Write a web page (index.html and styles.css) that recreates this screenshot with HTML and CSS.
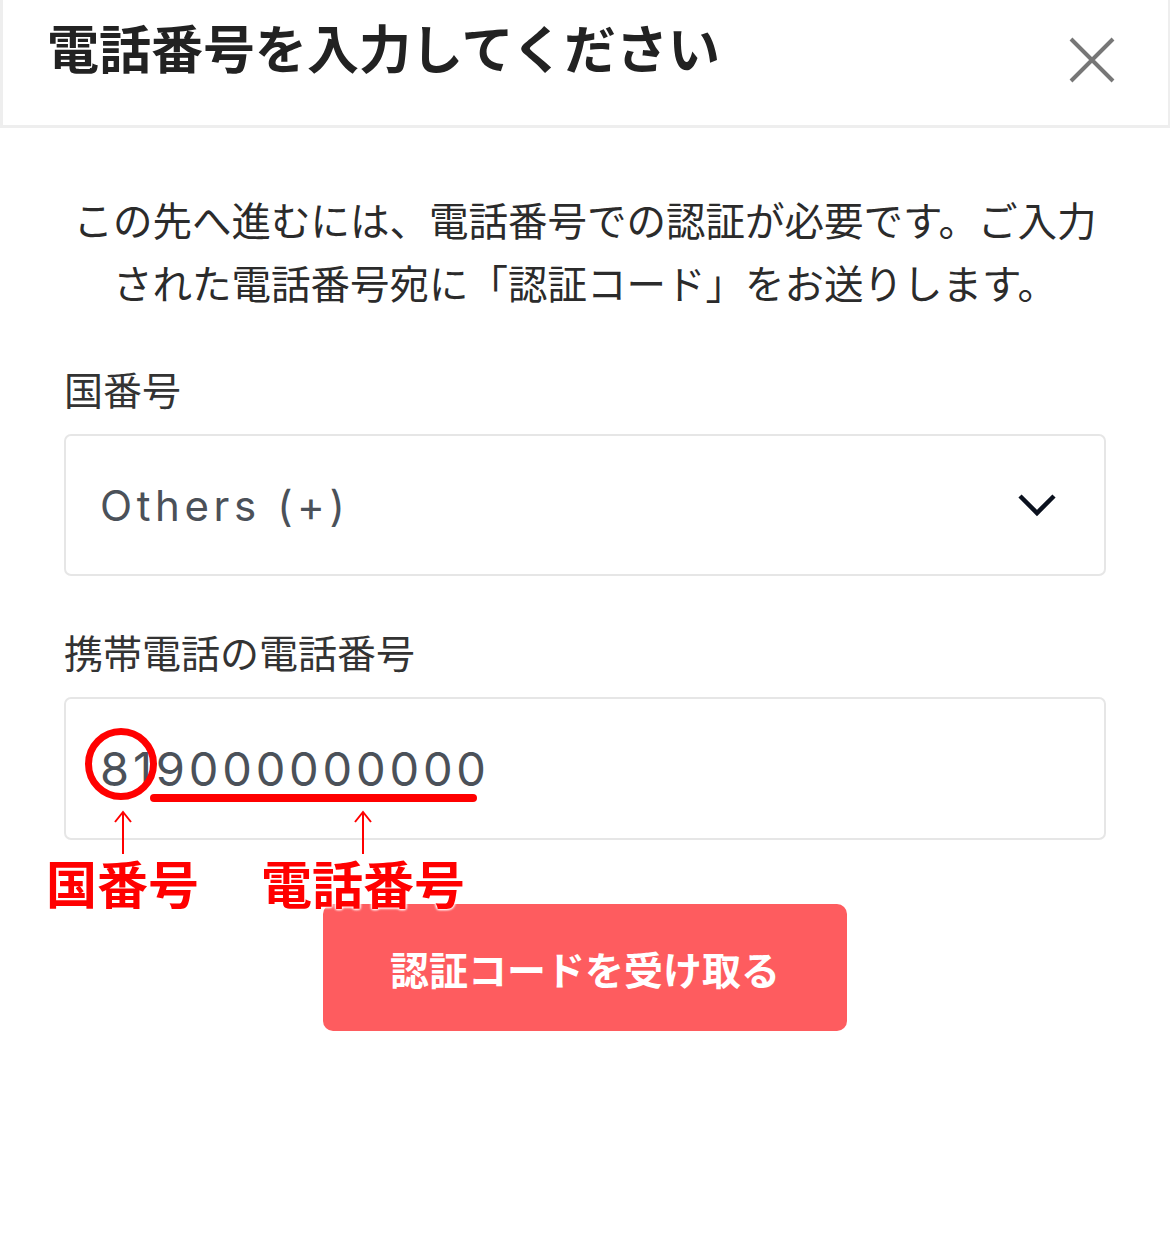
FILE: index.html
```html
<!DOCTYPE html>
<html lang="ja">
<head>
    <meta charset="utf-8">
    <link rel="stylesheet" href="styles.css">
</head>
<body>
    <div class="header">
        <h1 class="titulo">電話番号を入力してください</h1>
        <button class="fechar" aria-label="閉じる">
            <svg width="46" height="46" viewBox="0 0 46 46">
                <path d="M2 2 L44 44 M44 2 L2 44" stroke="#777" stroke-width="4" fill="none"/>
            </svg>
        </button>
    </div>

    <div class="conteudo">
        <p class="descricao">この先へ進むには、電話番号での認証が必要です。ご入力された電話番号宛に「認証コード」をお送りします。</p>

        <div class="rotulo">国番号</div>
        <div class="campo campo-select">
            <span class="valor">Others (+)</span>
            <svg class="seta" width="40" height="24" viewBox="0 0 40 24">
                <path d="M3 3 L20 20 L37 3" stroke="#0b111e" stroke-width="4.5" fill="none"/>
            </svg>
        </div>

        <div class="rotulo">携帯電話の電話番号</div>
        <div class="campo-telefone">
            <div class="campo">
                <span class="valor numero">819000000000</span>
            </div>

            <!-- marcações vermelhas por cima do campo -->
            <div class="marca-circulo"></div>
            <div class="marca-linha"></div>
            <svg class="marca-seta seta-1" width="20" height="44" viewBox="0 0 20 44">
                <path d="M10 44 V2 M2 12 L10 2 L18 12" stroke="#f00" stroke-width="2" fill="none"/>
            </svg>
            <svg class="marca-seta seta-2" width="20" height="44" viewBox="0 0 20 44">
                <path d="M10 44 V2 M2 12 L10 2 L18 12" stroke="#f00" stroke-width="2" fill="none"/>
            </svg>
            <span class="marca-texto texto-1">国番号</span>
            <span class="marca-texto texto-2">電話番号</span>
        </div>

        <div class="acoes">
            <button class="botao">認証コードを受け取る</button>
        </div>
    </div>
</body>
</html>
```

FILE: styles.css
```css
/* Tela de verificação por telefone */
body {
    margin: 0;
    background-color: #fff;
    font-family: "Noto Sans CJK JP", "Noto Sans", sans-serif;
    color: #333;
}

.header {
    height: 128px;
    box-sizing: border-box;
    border-left: 3px solid #eee;
    border-right: 2px solid #eee;
    border-bottom: 3px solid #eee;
    display: flex;
    justify-content: space-between;
    align-items: flex-start;
    padding: 21px 53px 0 44px;
}

.titulo {
    margin: 0;
    font-size: 52px;
    line-height: 1;
    font-weight: 700;
    color: #222;
}

.fechar {
    background: none;
    border: none;
    padding: 0;
    margin-top: 16px;
    cursor: pointer;
    display: flex;
}

.conteudo {
    padding: 59px 64px 0 64px;
}

.descricao {
    margin: 0;
    font-size: 39.5px;
    line-height: 63px;
    text-align: center;
    color: #2b2b2b;
}

.rotulo {
    font-size: 39px;
    line-height: 53px;
    margin-top: 49px;
    margin-bottom: 19px;
    color: #333;
}

.campo {
    height: 143px;
    box-sizing: border-box;
    border: 2px solid #e6e6e6;
    border-radius: 7px;
    display: flex;
    align-items: center;
    justify-content: space-between;
    padding: 0 47px 0 34px;
}

.campo-select {
    height: 142px;
    padding-left: 34px;
}

.valor {
    font-family: "Inter", "Lato", sans-serif;
    font-size: 42px;
    letter-spacing: 4.6px;
    color: #4b5159;
}

.numero {
    font-size: 47px;
    letter-spacing: 3.8px;
}

.seta {
    display: block;
}

.campo-telefone {
    position: relative;
}

.marca-circulo {
    position: absolute;
    left: 21px;
    top: 31px;
    width: 72px;
    height: 72px;
    box-sizing: border-box;
    border: 7px solid #f00;
    border-radius: 50%;
}

.marca-linha {
    position: absolute;
    left: 86px;
    top: 97px;
    width: 327px;
    height: 8px;
    background-color: #f00;
    border-radius: 4px;
}

.marca-seta {
    position: absolute;
    top: 113px;
}

.seta-1 {
    left: 49px;
}

.seta-2 {
    left: 289px;
}

.marca-texto {
    position: absolute;
    top: 160px;
    z-index: 2;
    font-size: 51px;
    line-height: 1;
    font-weight: 700;
    color: #f00;
    text-shadow: 0 0 3px #fff, 0 0 3px #fff, 0 0 3px #fff, 0 0 3px #fff;
}

.texto-1 {
    left: -18px;
}

.texto-2 {
    left: 197px;
}

.acoes {
    display: flex;
    justify-content: center;
    margin-top: 64px;
}

.botao {
    width: 524px;
    height: 127px;
    background-color: #fe5c5f;
    color: #fff;
    border: none;
    border-radius: 10px;
    font-family: "Noto Sans CJK JP", sans-serif;
    font-size: 39px;
    font-weight: 700;
    cursor: pointer;
}
```
